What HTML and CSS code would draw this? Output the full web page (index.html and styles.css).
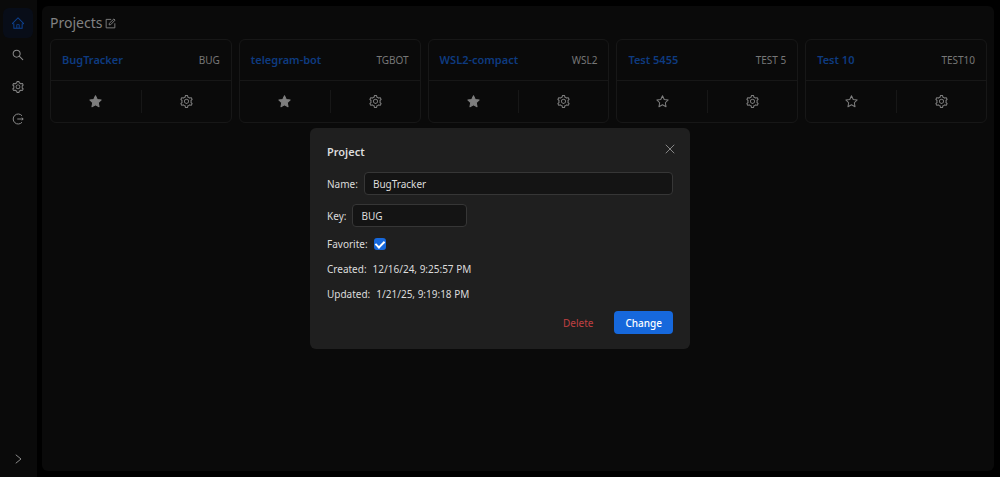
FILE: index.html
```html
<!DOCTYPE html>
<html lang="en">
<head>
<meta charset="utf-8">
<title>Projects</title>
<link rel="stylesheet" href="styles.css">
</head>
<body>
<svg width="0" height="0" class="sprite" aria-hidden="true">
  <symbol id="gear" viewBox="64 64 896 896"><path d="M924.8 625.7l-65.5-56c3.1-19 4.7-38.4 4.7-57.8s-1.6-38.8-4.7-57.8l65.5-56a32.03 32.03 0 009.3-35.2l-.9-2.6a443.74 443.74 0 00-79.7-137.9l-1.8-2.1a32.12 32.12 0 00-35.1-9.5l-81.3 28.9c-30-24.6-63.5-44-99.7-57.6l-15.7-85a32.05 32.05 0 00-25.8-25.7l-2.7-.5c-52.1-9.4-106.9-9.4-159 0l-2.7.5a32.05 32.05 0 00-25.8 25.7l-15.8 85.4a351.86 351.86 0 00-99 57.4l-81.9-29.1a32 32 0 00-35.1 9.5l-1.8 2.1a446.02 446.02 0 00-79.7 137.9l-.9 2.6c-4.5 12.5-.8 26.5 9.3 35.2l66.3 56.6c-3.1 18.8-4.6 38-4.6 57.1 0 19.2 1.5 38.4 4.6 57.1L99 625.5a32.03 32.03 0 00-9.3 35.2l.9 2.6c18.1 50.4 44.9 96.9 79.7 137.9l1.8 2.1a32.12 32.12 0 0035.1 9.5l81.9-29.1c29.8 24.5 63.1 43.9 99 57.4l15.8 85.4a32.05 32.05 0 0025.8 25.7l2.7.5a449.4 449.4 0 00159 0l2.7-.5a32.05 32.05 0 0025.8-25.7l15.7-85a350 350 0 0099.7-57.6l81.3 28.9a32 32 0 0035.1-9.5l1.8-2.1c34.8-41.1 61.6-87.5 79.7-137.9l.9-2.6c4.5-12.3.8-26.3-9.3-35zM788.3 465.9c2.5 15.1 3.8 30.6 3.8 46.1s-1.3 31-3.8 46.1l-6.6 40.1 74.7 63.9a370.03 370.03 0 01-42.6 73.6L721 702.8l-31.4 25.8c-23.9 19.6-50.5 35-79.3 45.8l-38.1 14.3-17.9 97a377.5 377.5 0 01-85 0l-17.9-97.2-37.8-14.5c-28.5-10.8-55-26.2-78.7-45.7l-31.4-25.9-93.4 33.2c-17-22.9-31.2-47.6-42.6-73.6l75.5-64.5-6.5-40c-2.4-14.9-3.7-30.3-3.7-45.5 0-15.3 1.2-30.6 3.7-45.5l6.5-40-75.5-64.5c11.3-26.1 25.6-50.7 42.6-73.6l93.4 33.2 31.4-25.9c23.7-19.5 50.2-34.9 78.7-45.7l37.9-14.3 17.9-97.2c28.1-3.2 56.8-3.2 85 0l17.9 97 38.1 14.3c28.7 10.8 55.4 26.2 79.3 45.8l31.4 25.8 92.8-32.9c17 22.9 31.2 47.6 42.6 73.6L781.8 426l6.5 39.9zM512 326c-97.2 0-176 78.8-176 176s78.8 176 176 176 176-78.8 176-176-78.8-176-176-176zm79.2 255.2A111.6 111.6 0 01512 614c-29.9 0-58-11.7-79.2-32.8A111.6 111.6 0 01400 502c0-29.9 11.7-58 32.8-79.2C454 401.6 482.1 390 512 390c29.9 0 58 11.6 79.2 32.8A111.6 111.6 0 01624 502c0 29.9-11.7 58-32.8 79.2z"/></symbol>
  <symbol id="star" viewBox="0 0 24 24"><path d="M12 1.500l3.200 6.700 7.300 1-5.300 5.100 1.300 7.300L12 18.100l-6.500 3.500 1.300-7.300L1.500 9.200l7.300-1z" stroke="currentColor" stroke-width="1.900" stroke-linejoin="round"/></symbol>
  <symbol id="home" viewBox="64 64 896 896"><path d="M946.5 505L560.1 118.8l-25.9-25.9a31.5 31.5 0 00-44.4 0L77.500 505a63.9 63.9 0 00-18.8 46c.4 35.2 29.7 63.3 64.9 63.3h42.5V940h691.8V614.3h43.4c17.1 0 33.2-6.700 45.3-18.8a63.6 63.6 0 0018.7-45.3c0-17-6.700-33.1-18.8-45.2zM568 868H456V664h112v204zm217.9-325.7V868H632V640c0-22.1-17.9-40-40-40H432c-22.1 0-40 17.9-40 40v228H238.1V542.3h-96l370-369.7 23.1 23.1L882 542.3h-96.1z"/></symbol>
</svg>

<div class="app">
  <nav class="sidebar" aria-label="Main">
    <a class="nav-item active" href="#" aria-label="Home"><svg><use href="#home"/></svg></a>
    <a class="nav-item" href="#" aria-label="Search"><svg viewBox="64 64 896 896"><path d="M909.6 854.5L649.9 594.8C690.2 542.7 712 479 712 412c0-80.2-31.3-155.4-87.9-212.1-56.6-56.7-132-87.9-212.1-87.9s-155.5 31.3-212.1 87.9C143.2 256.5 112 331.8 112 412c0 80.1 31.3 155.5 87.9 212.1C256.5 680.8 331.8 712 412 712c67 0 130.6-21.8 182.7-62l259.7 259.6a8.2 8.2 0 0011.6 0l43.6-43.5a8.2 8.2 0 000-11.6zM570.4 570.4C528 612.7 471.8 636 412 636s-116-23.3-158.4-65.6C211.3 528 188 471.8 188 412s23.3-116.1 65.6-158.4C296 211.3 352.2 188 412 188s116.1 23.2 158.4 65.6S636 352.2 636 412s-23.3 116.1-65.6 158.4z"/></svg></a>
    <a class="nav-item" href="#" aria-label="Settings"><svg><use href="#gear"/></svg></a>
    <a class="nav-item" href="#" aria-label="Log out"><svg viewBox="0 0 24 24" class="line"><path d="M20 5.500A10 10 0 1 0 20 18.500M10.500 12H22M19.500 9.500L22.500 12l-3 2.500"/></svg></a>
    <button class="nav-item expand" type="button" aria-label="Expand"><svg viewBox="0 0 24 24" class="line"><path d="M7.500 3.500L18 12 7.500 20.500"/></svg></button>
  </nav>

  <main class="content">
    <header class="page-head">
      <h1>Projects</h1>
      <button class="edit" type="button" aria-label="Edit projects"><svg viewBox="0 0 24 24" class="line"><path d="M13.500 3H2.500v18.500h19V11.500M9 15l.5-3.500L19.500 2l2.500 2.500L12.500 14.500z"/></svg></button>
    </header>
    <section class="cards">
      <article class="card">
        <div class="card-head"><a href="#">BugTracker</a><span>BUG</span></div>
        <div class="card-actions"><button type="button" aria-label="Unstar"><svg><use href="#star"/></svg></button><button type="button" aria-label="Settings"><svg><use href="#gear"/></svg></button></div>
      </article>
      <article class="card">
        <div class="card-head"><a href="#">telegram-bot</a><span>TGBOT</span></div>
        <div class="card-actions"><button type="button" aria-label="Unstar"><svg><use href="#star"/></svg></button><button type="button" aria-label="Settings"><svg><use href="#gear"/></svg></button></div>
      </article>
      <article class="card">
        <div class="card-head"><a href="#">WSL2-compact</a><span>WSL2</span></div>
        <div class="card-actions"><button type="button" aria-label="Unstar"><svg><use href="#star"/></svg></button><button type="button" aria-label="Settings"><svg><use href="#gear"/></svg></button></div>
      </article>
      <article class="card">
        <div class="card-head"><a href="#">Test 5455</a><span>TEST 5</span></div>
        <div class="card-actions"><button type="button" aria-label="Star"><svg class="hollow"><use href="#star"/></svg></button><button type="button" aria-label="Settings"><svg><use href="#gear"/></svg></button></div>
      </article>
      <article class="card">
        <div class="card-head"><a href="#">Test 10</a><span>TEST10</span></div>
        <div class="card-actions"><button type="button" aria-label="Star"><svg class="hollow"><use href="#star"/></svg></button><button type="button" aria-label="Settings"><svg><use href="#gear"/></svg></button></div>
      </article>
    </section>
  </main>
</div>

<div class="overlay">
  <form class="modal" role="dialog" aria-modal="true" aria-labelledby="modal-title">
    <header class="modal-head">
      <h2 id="modal-title">Project</h2>
      <button class="close" type="button" aria-label="Close"><svg viewBox="0 0 24 24" class="line"><path d="M3.500 3.500l17 17M20.500 3.500l-17 17"/></svg></button>
    </header>
    <div class="field"><label for="name">Name:</label><input class="text" id="name" type="text" value="BugTracker"></div>
    <div class="field"><label for="key">Key:</label><input class="text short" id="key" type="text" value="BUG"></div>
    <div class="field"><label for="favorite">Favorite:</label><input class="check" id="favorite" type="checkbox" checked></div>
    <div class="field"><span>Created:</span><time>12/16/24, 9:25:57 PM</time></div>
    <div class="field"><span>Updated:</span><time>1/21/25, 9:19:18 PM</time></div>
    <footer class="modal-foot">
      <button class="btn danger" type="button">Delete</button>
      <button class="btn primary" type="submit">Change</button>
    </footer>
  </form>
</div>
</body>
</html>
```
FILE: styles.css
```css
* { box-sizing: border-box; }

body {
  margin: 0;
  background: #000;
  color: #dcdcdc;
  font: 400 10px/16px "Noto Sans", "Open Sans", sans-serif;
}

button, input { font: inherit; color: inherit; }
button { padding: 0; border: 0; background: none; display: flex; align-items: center; justify-content: center; }
a { text-decoration: none; color: inherit; }
h1, h2 { margin: 0; }
svg { width: 12px; height: 12px; fill: currentColor; display: block; }
.sprite { position: absolute; width: 0; height: 0; }
.line { fill: none; stroke: currentColor; stroke-width: 2; }

.app { display: flex; min-height: 100vh; }

.sidebar {
  width: 37px;
  padding: 8px 4px 3px 3px;
  background: #0a0a0a;
  color: #8a8a8a;
  display: flex;
  flex-direction: column;
  gap: 2px;
}
.nav-item { height: 30px; border-radius: 6px; display: flex; align-items: center; justify-content: center; }
.nav-item.active { background: #080d18; color: #0d4292; }
.expand { margin-top: auto; }

.content {
  flex: 1;
  margin: 6px 6px 6px 5px;
  padding: 7px 7px 7px 8px;
  background: #0a0a0a;
  border-radius: 6px;
}
.page-head { display: flex; align-items: center; gap: 3px; height: 20px; margin-bottom: 6px; color: #828282; }
.page-head h1 { font-size: 14px; line-height: 20px; font-weight: 400; }
.edit svg { width: 11px; height: 11px; }

.cards { display: grid; grid-template-columns: repeat(5, 1fr); gap: 7px; }
.card { border: 1px solid #171717; border-radius: 6px; }
.card-head {
  height: 41px;
  padding: 0 11px;
  display: flex;
  align-items: center;
  justify-content: space-between;
  border-bottom: 1px solid #171717;
  color: #777;
}
.card-head a { color: #0e3b80; font-size: 11px; font-weight: 600; }
.card-actions { display: grid; grid-template-columns: 1fr 1fr; padding: 9px 0; color: #7e7e7e; }
.card-actions button { height: 23px; }
.card-actions svg { width: 13px; height: 13px; }
.card-actions button + button { border-left: 1px solid #171717; }
.card-actions .hollow { fill: none; }

.overlay { position: fixed; inset: 0; display: flex; align-items: center; justify-content: center; }
.modal {
  width: 380px;
  padding: 13px 17px 15px;
  background: #1f1f1f;
  border-radius: 6px;
}
.modal-head { display: flex; align-items: flex-start; justify-content: space-between; height: 31px; }
.modal-head h2 { font-size: 11px; line-height: 22px; font-weight: 600; }
.close { width: 16px; height: 16px; margin-right: -5px; color: #858585; }

.field { display: flex; align-items: center; gap: 6px; margin-bottom: 9px; }
.text {
  flex: 1;
  min-width: 0;
  height: 23px;
  padding: 0 8px;
  background: #141414;
  border: 1px solid #363636;
  border-radius: 4px;
}
.short { flex: 0 0 115px; }
.check {
  appearance: none;
  width: 12px;
  height: 12px;
  margin: 0;
  border-radius: 3px;
  background: #1668dc;
  display: grid;
  place-items: center;
}
.check:checked::before {
  content: "";
  width: 4px;
  height: 7px;
  margin-bottom: 2px;
  border: solid #fff;
  border-width: 0 2px 2px 0;
  transform: rotate(45deg);
}
.modal-foot { display: flex; justify-content: flex-end; gap: 10px; }
.btn { height: 23px; padding: 0 11px; border-radius: 4px; }
.danger { color: #c04042; }
.primary { background: #1668dc; color: #fff; font-weight: 500; }
```
